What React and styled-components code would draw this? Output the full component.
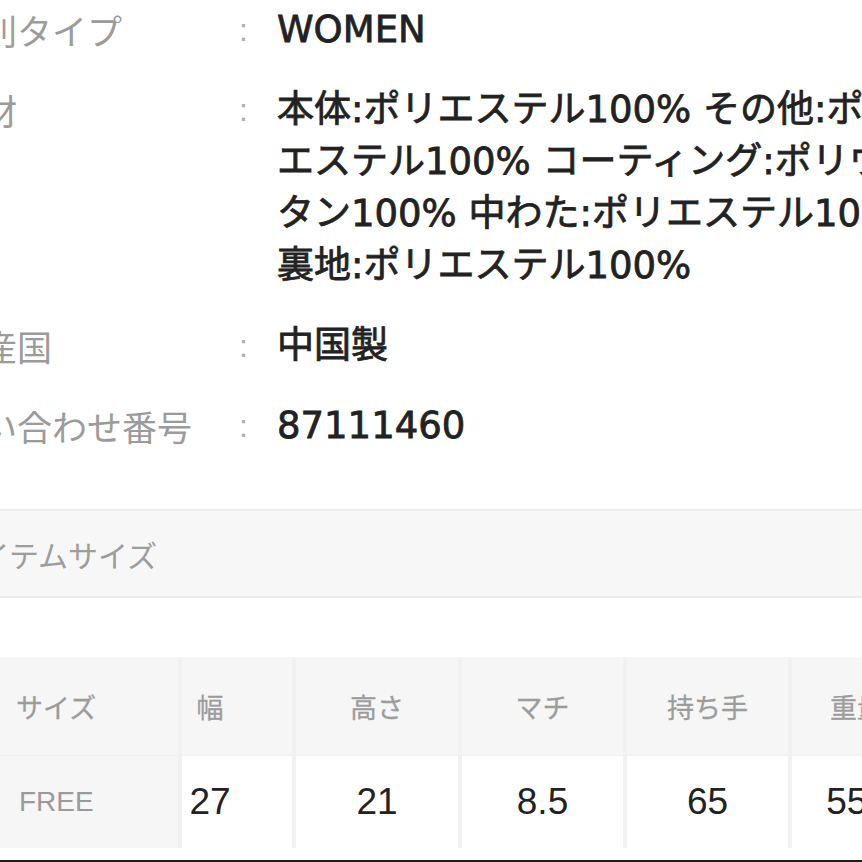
import React from 'react';
import styled, { createGlobalStyle } from 'styled-components';

const GlobalStyle = createGlobalStyle`
  html, body {
    margin: 0;
    padding: 0;
    background: #ffffff;
    overflow: hidden;
  }
`;

const Page = styled.div`
  width: 862px;
  height: 862px;
  overflow: hidden;
  background: #ffffff;
  display: flex;
  flex-direction: column;
`;

const Specs = styled.div`
  margin: -10px 0 0 -53px;
  display: flex;
  flex-direction: column;
`;

const SpecRow = styled.div`
  display: grid;
  grid-template-columns: 290px 40px 1fr;
  padding: 14px 0;
  line-height: 52px;
`;

const Label = styled.div`
  font-family: "Noto Sans CJK JP", sans-serif;
  font-size: 35px;
  color: #9b9b9b;
  white-space: nowrap;
`;

const Colon = styled.div`
  font-family: "Liberation Sans", sans-serif;
  font-size: 32px;
  color: #adadad;
  padding-left: 2px;
`;

const Value = styled.div`
  font-family: "DejaVu Sans", "Noto Sans CJK JP", sans-serif;
  font-weight: 400;
  font-size: 37px;
  color: #222222;
  -webkit-text-stroke: 0.8px #222222;
  white-space: nowrap;
`;

const SectionBar = styled.div`
  margin-top: 43px;
  height: 86px;
  border-top: 2px solid #ececec;
  border-bottom: 2px solid #ececec;
  background: #f7f7f7;
  display: flex;
  align-items: center;
  font-family: "Noto Sans CJK JP", sans-serif;
  font-size: 30px;
  color: #9d9d9d;
  white-space: nowrap;
  text-indent: -49px;
`;

const SizeTable = styled.div`
  margin-top: 59px;
  width: 953px;
  display: grid;
  grid-template-columns: 178px 110px 162px 161px 161px 130px;
  grid-template-rows: 98px 92px;
  column-gap: 4px;
  row-gap: 1px;
  background: #f1f1f1;
`;

const HeadCell = styled.div`
  background: #f6f6f6;
  display: flex;
  align-items: center;
  justify-content: ${p => (p.left ? 'flex-start' : 'center')};
  padding: ${p => (p.left ? '0 0 0 16px' : p.shift ? `0 ${p.shift}px 0 0` : '0')};
  font-family: "Noto Sans CJK JP", sans-serif;
  font-size: 27px;
  color: #9c9c9c;
  -webkit-text-stroke: 0.3px #9c9c9c;
  white-space: nowrap;
`;

const DataCell = styled.div`
  background: ${p => (p.left ? '#f6f6f6' : '#ffffff')};
  display: flex;
  align-items: center;
  justify-content: ${p => (p.left ? 'flex-start' : 'center')};
  padding: ${p => (p.left ? '0 0 0 19px' : p.shift ? `0 ${p.shift}px 0 0` : '0')};
  font-family: "Liberation Sans", sans-serif;
  font-size: ${p => (p.left ? '28px' : '37px')};
  color: ${p => (p.left ? '#9a9a9a' : '#222222')};
  white-space: nowrap;
`;

const BottomRule = styled.div`
  margin-top: 12px;
  height: 2px;
  background: #1c1c1c;
`;

const specs = [
  { label: '性別タイプ', value: ['WOMEN'] },
  {
    label: '素材',
    value: [
      '本体:ポリエステル100% その他:ポリ',
      'エステル100% コーティング:ポリウレ',
      'タン100% 中わた:ポリエステル100%',
      '裏地:ポリエステル100%',
    ],
  },
  { label: '生産国', value: ['中国製'] },
  { label: '問い合わせ番号', value: ['87111460'] },
];

const columns = [
  { head: 'サイズ', value: 'FREE', left: true },
  { head: '幅', value: '27', shift: 54 },
  { head: '高さ', value: '21' },
  { head: 'マチ', value: '8.5' },
  { head: '持ち手', value: '65' },
  { head: '重量', value: '550' },
];

const App = () => {
  return (
    <Page>
      <GlobalStyle />
      <Specs>
        {specs.map(row => (
          <SpecRow key={row.label}>
            <Label>{row.label}</Label>
            <Colon>:</Colon>
            <Value>
              {row.value.map((line, i) => (
                <React.Fragment key={i}>
                  {i > 0 && <br />}
                  {line}
                </React.Fragment>
              ))}
            </Value>
          </SpecRow>
        ))}
      </Specs>
      <SectionBar>アイテムサイズ</SectionBar>
      <SizeTable>
        {columns.map(c => (
          <HeadCell key={c.head} left={c.left} shift={c.shift}>{c.head}</HeadCell>
        ))}
        {columns.map(c => (
          <DataCell key={c.head} left={c.left} shift={c.shift}>{c.value}</DataCell>
        ))}
      </SizeTable>
      <BottomRule />
    </Page>
  );
};

export default App;
